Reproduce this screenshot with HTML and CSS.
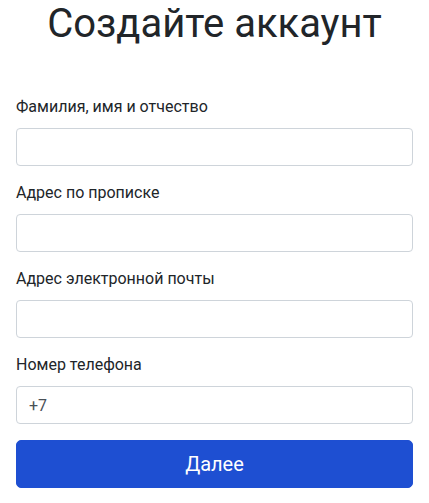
FILE: index.html
```html
<!DOCTYPE html>
<html lang="ru">
<head>
<meta charset="utf-8">
<title>Создайте аккаунт</title>
<link rel="stylesheet" href="styles.css">
</head>
<body>
<main class="page">
  <h1 class="title">Создайте аккаунт</h1>
  <form class="form">
    <div class="group">
      <label class="label" for="fio">Фамилия, имя и отчество</label>
      <input class="control" id="fio" type="text">
    </div>
    <div class="group">
      <label class="label" for="addr">Адрес по прописке</label>
      <input class="control" id="addr" type="text">
    </div>
    <div class="group">
      <label class="label" for="email">Адрес электронной почты</label>
      <input class="control" id="email" type="email">
    </div>
    <div class="group">
      <label class="label" for="phone">Номер телефона</label>
      <input class="control" id="phone" type="tel" value="+7">
    </div>
    <button class="btn" type="button">Далее</button>
  </form>
</main>
</body>
</html>
```

FILE: styles.css
```css
* { box-sizing: border-box; }
html, body { margin: 0; padding: 0; background: #fff; }
body {
  font-family: Roboto, "Liberation Sans", Arial, sans-serif;
  color: #212529;
}
.page {
  width: 429px;
  padding: 0 16px;
}
.title {
  margin: 0 0 47px;
  font-size: 40px;
  line-height: 48px;
  font-weight: 400;
  text-align: center;
  color: #212529;
}
.form {
  display: flex;
  flex-direction: column;
}
.group {
  display: flex;
  flex-direction: column;
  margin-bottom: 15px;
}
.label {
  font-size: 16px;
  line-height: 24px;
  margin-bottom: 9px;
  color: #212529;
}
.control {
  display: block;
  width: 100%;
  height: 38px;
  padding: 6px 12px;
  font-family: Roboto, "Liberation Sans", Arial, sans-serif;
  font-size: 16px;
  line-height: 24px;
  color: #495057;
  background: #fff;
  border: 1px solid #ced4da;
  border-radius: 4px;
  outline: none;
}
.btn {
  display: block;
  width: 100%;
  height: 48px;
  margin-top: 1px;
  padding: 8px 16px;
  font-family: Roboto, "Liberation Sans", Arial, sans-serif;
  font-size: 20px;
  line-height: 30px;
  font-weight: 400;
  color: #fff;
  background: #1e4fd2;
  border: 1px solid #1e4fd2;
  border-radius: 5px;
  cursor: pointer;
}
```
